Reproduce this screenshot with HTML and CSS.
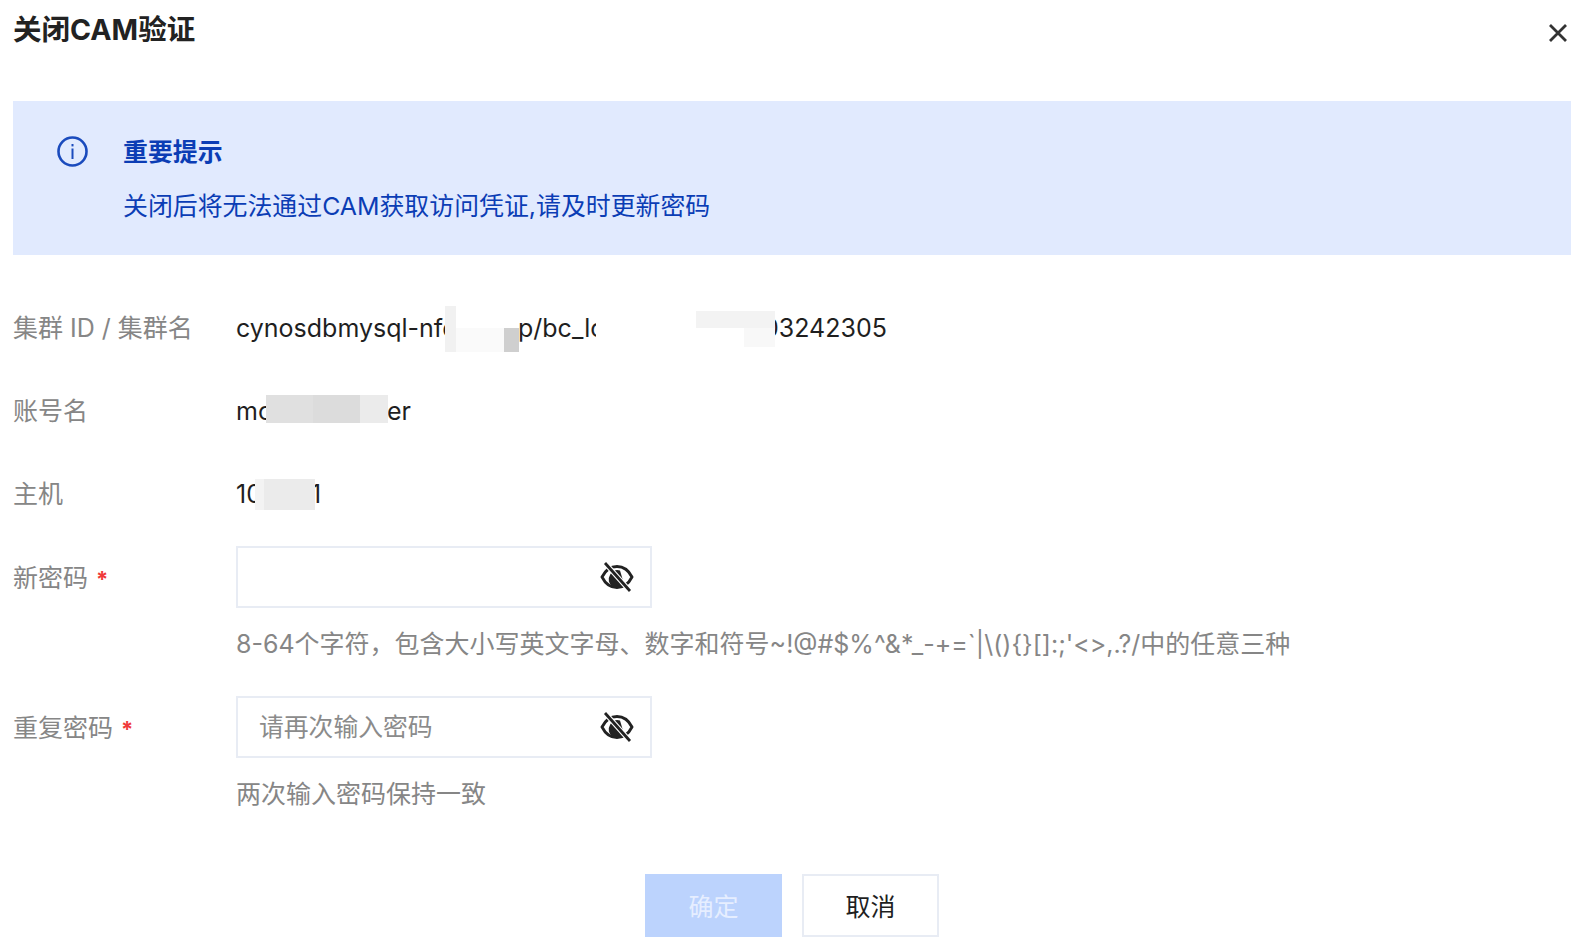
FILE: index.html
```html
<!DOCTYPE html>
<html lang="zh-CN">
<head>
<meta charset="utf-8">
<title>关闭CAM验证</title>
<link rel="stylesheet" href="styles.css">
</head>
<body>
<div class="dialog">
  <header class="head">
    <h1 class="title">关闭CAM验证</h1>
    <svg class="close" viewBox="0 0 20 20" width="20" height="20"><path d="M2 2L18 18M18 2L2 18" fill="none" stroke="#333" stroke-width="2.800"/></svg>
  </header>
  <section class="alert">
    <svg class="alert-icon" viewBox="0 0 31 31" width="31" height="31">
      <circle cx="15.500" cy="15.500" r="14" fill="none" stroke="#1a4bbd" stroke-width="2.600"/>
      <rect x="14.500" y="8" width="2" height="2.400" fill="#1a4bbd"/>
      <rect x="14.500" y="12.500" width="2" height="10.500" fill="#1a4bbd"/>
    </svg>
    <div class="alert-body">
      <div class="alert-title">重要提示</div>
      <div class="alert-text">关闭后将无法通过CAM获取访问凭证,请及时更新密码</div>
    </div>
  </section>
  <div class="form">
    <div class="row">
      <div class="label">集群 ID / 集群名</div>
      <div class="value">
        <span class="seg seg-a">cynosdbmysql-nfe</span><span class="seg seg-b">p/bc_lo</span><span class="seg">03242305</span>
        <i class="mask m1"></i><i class="mask m2"></i><i class="mask m3"></i><i class="mask m4"></i><i class="mask m5"></i><i class="mask m6"></i><i class="mask m7"></i><i class="mask m7b"></i>
      </div>
    </div>
    <div class="row">
      <div class="label">账号名</div>
      <div class="value">
        <span class="seg seg-c">mc</span><span class="seg">er</span>
        <i class="mask m8"></i><i class="mask m8b"></i><i class="mask m9"></i>
      </div>
    </div>
    <div class="row row-last">
      <div class="label">主机</div>
      <div class="value">
        <span class="seg seg-d">10</span><span class="seg">1</span>
        <i class="mask m10"></i><i class="mask m11"></i>
      </div>
    </div>
    <div class="row row-input">
      <div class="label">新密码<span class="req">*</span></div>
      <div class="field">
        <div class="input">
          <span class="placeholder"></span>
          <svg class="eye" viewBox="0 0 34 34" width="34" height="34"><path d="M2 17C5.500 10 10.500 6.500 17 6.500S28.500 10 32 17C28.500 24 23.500 27.500 17 27.500S5.500 24 2 17Z" fill="none" stroke="#222" stroke-width="2.800"/><path d="M10 15A7.500 7.500 0 0 1 20 10.500L24 24A8 8 0 0 1 10 15Z" fill="#222"/><path d="M5 3L30 31" stroke="#fff" stroke-width="5"/><path d="M5 3L30 31" stroke="#222" stroke-width="2.800"/></svg>
        </div>
        <div class="hint">8-64个字符，包含大小写英文字母、数字和符号~!@#$%^&amp;*_-+=`|\(){}[]:;'&lt;&gt;,.?/中的任意三种</div>
      </div>
    </div>
    <div class="row row-input">
      <div class="label">重复密码<span class="req">*</span></div>
      <div class="field">
        <div class="input">
          <span class="placeholder">请再次输入密码</span>
          <svg class="eye" viewBox="0 0 34 34" width="34" height="34"><path d="M2 17C5.500 10 10.500 6.500 17 6.500S28.500 10 32 17C28.500 24 23.500 27.500 17 27.500S5.500 24 2 17Z" fill="none" stroke="#222" stroke-width="2.800"/><path d="M10 15A7.500 7.500 0 0 1 20 10.500L24 24A8 8 0 0 1 10 15Z" fill="#222"/><path d="M5 3L30 31" stroke="#fff" stroke-width="5"/><path d="M5 3L30 31" stroke="#222" stroke-width="2.800"/></svg>
        </div>
        <div class="hint">两次输入密码保持一致</div>
      </div>
    </div>
  </div>
  <footer class="actions">
    <button class="btn btn-primary" type="button">确定</button>
    <button class="btn btn-default" type="button">取消</button>
  </footer>
</div>
</body>
</html>
```
FILE: styles.css
```css
* { box-sizing: border-box; }
html, body { margin: 0; padding: 0; background: #fff; }
body {
  width: 1583px;
  height: 947px;
  overflow: hidden;
  font-family: Inter, "Noto Sans CJK SC", sans-serif;
  color: #1f1f1f;
}
.dialog { padding: 0 12px 0 13px; }
.head {
  display: flex;
  justify-content: space-between;
  height: 101px;
  padding-top: 11px;
}
.title {
  margin: 0;
  font-size: 28.500px;
  line-height: 38px;
  font-weight: 700;
  color: #222;
}
.close { margin: 12px 3px 0 0; }
.alert {
  display: flex;
  height: 154px;
  padding: 35px 0 0 44px;
  background: #e1eafe;
  color: #0b3db5;
}
.alert-icon { flex: none; }
.alert-body { margin-left: 35px; font-size: 24.900px; line-height: 32px; }
.alert-title { font-weight: 700; }
.alert-text { margin-top: 22px; }
.form { padding-top: 57px; }
.row {
  display: grid;
  grid-template-columns: 223px 1fr;
  align-items: center;
  height: 32px;
  margin-bottom: 51px;
  font-size: 25px;
  line-height: 32px;
}
.row-last { margin-bottom: 36px; }
.row-input {
  align-items: start;
  height: auto;
  margin-bottom: 0;
}
.row-input .label { padding-top: 16px; }
.label { color: #868686; white-space: nowrap; }
.req { color: #f03a3a; margin-left: 8px; font-size: 22px; font-weight: 700; }
.value { position: relative; display: flex; white-space: nowrap; color: #1f1f1f; }
.seg { flex: none; }
.seg-a { width: 282px; }
.seg-b { width: 245px; }
.seg-c { width: 151px; }
.seg-d { width: 75px; }
.mask { position: absolute; display: block; }
.m1 { left: 209px; top: -6px; width: 11px; height: 46px; background: #f1f1f1; }
.m2 { left: 220px; top: -6px; width: 63px; height: 22px; background: #fff; }
.m3 { left: 220px; top: 16px; width: 48px; height: 24px; background: #fafafa; }
.m4 { left: 268px; top: 16px; width: 15px; height: 24px; background: #cfcfcf; }
.m5 { left: 360px; top: -6px; width: 100px; height: 46px; background: #fff; }
.m6 { left: 460px; top: -1px; width: 48px; height: 17px; background: #f3f3f3; }
.m7 { left: 508px; top: -1px; width: 31px; height: 17px; background: #f3f3f3; }
.m7b { left: 508px; top: 16px; width: 31px; height: 19px; background: #f8f8f8; }
.m8 { left: 30px; top: 0; width: 47px; height: 28px; background: #e0e0e0; }
.m8b { left: 77px; top: 0; width: 47px; height: 28px; background: #dcdcdc; }
.m9 { left: 124px; top: 0; width: 28px; height: 28px; background: #ebebeb; }
.m10 { left: 19px; top: 1px; width: 9px; height: 31px; background: #f3f3f3; }
.m11 { left: 28px; top: 1px; width: 51px; height: 31px; background: #ebebeb; }
.field { display: flex; flex-direction: column; }
.input {
  display: flex;
  align-items: center;
  justify-content: space-between;
  width: 416px;
  height: 62px;
  padding: 0 16px 0 21px;
  border: 2px solid #e8ecf4;
}
.placeholder { color: #8b8b8b; font-size: 24.800px; }
.eye { flex: none; }
.hint {
  margin: 20px 0 36px;
  height: 32px;
  color: #868686;
  font-size: 25px;
  line-height: 32px;
  white-space: nowrap;
}
.actions {
  display: flex;
  justify-content: center;
  gap: 20px;
  margin-top: 28px;
}
.btn {
  width: 137px;
  height: 63px;
  padding: 0 0 2px;
  font: inherit;
  font-size: 25px;
  border-radius: 0;
}
.btn-primary { background: #bcd3fd; border: 2px solid #bcd3fd; color: #e6eeff; }
.btn-default { background: #fff; border: 2px solid #e8ecf4; color: #1f1f1f; }
```
